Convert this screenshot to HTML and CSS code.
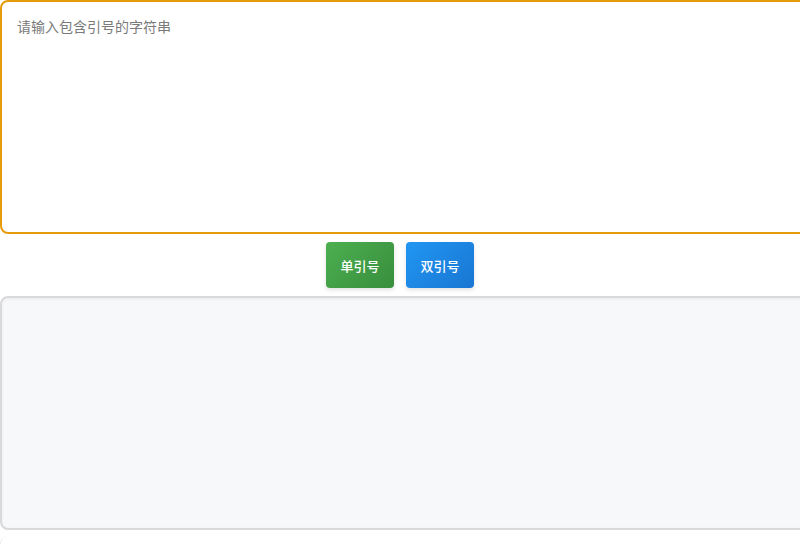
FILE: index.html
```html
<!DOCTYPE html>
<html lang="zh">
<head>
<meta charset="utf-8">
<title>引号</title>
<link rel="stylesheet" href="styles.css">
</head>
<body>
<div class="page">
  <textarea class="input" placeholder="请输入包含引号的字符串" autofocus></textarea>
  <div class="actions">
    <button class="btn btn-green">单引号</button>
    <button class="btn btn-blue">双引号</button>
  </div>
  <div class="output"></div>
  <div class="extra"></div>
</div>
</body>
</html>
```

FILE: styles.css
```css
html, body {
  margin: 0;
  padding: 0;
  overflow: hidden;
  background: #ffffff;
}
.page {
  width: 800px;
  font-family: "Noto Sans CJK SC", "Noto Sans", sans-serif;
}
.input {
  display: block;
  width: 100%;
  height: 200px;
  padding: 14px 15px 16px;
  margin: 0;
  border: 2px solid #e69a0c;
  border-radius: 8px;
  font-family: "Noto Sans CJK SC", "Noto Sans", sans-serif;
  font-size: 14px;
  line-height: 21px;
  color: #333;
  resize: none;
  outline: none;
  background: #fff;
}
.input::placeholder {
  color: #7a7a7a;
}
.actions {
  display: flex;
  justify-content: center;
  gap: 12px;
  padding: 8px 0;
}
.btn {
  width: 68px;
  height: 46px;
  border: none;
  border-radius: 4px;
  color: #fff;
  font-family: "Noto Sans CJK SC", "Noto Sans", sans-serif;
  font-size: 13px;
  font-weight: 500;
  box-shadow: 0 2px 4px rgba(0,0,0,0.12);
  padding: 0;
}
.btn-green {
  background: linear-gradient(135deg, #4caf50, #388e3c);
}
.btn-blue {
  background: linear-gradient(135deg, #2196f3, #1976d2);
}
.output {
  width: 100%;
  height: 198px;
  padding: 16px;
  border: 2px solid #d9d9d9;
  border-radius: 8px;
  background: #f7f8fa;
  box-shadow: inset 0 1px 3px rgba(0,0,0,0.06);
}
.extra {
  margin-top: 6px;
  width: 100%;
  height: 8px;
  border-left: 1px solid #ececec;
  border-radius: 8px 0 0 0;
  background: #fff;
}
```
